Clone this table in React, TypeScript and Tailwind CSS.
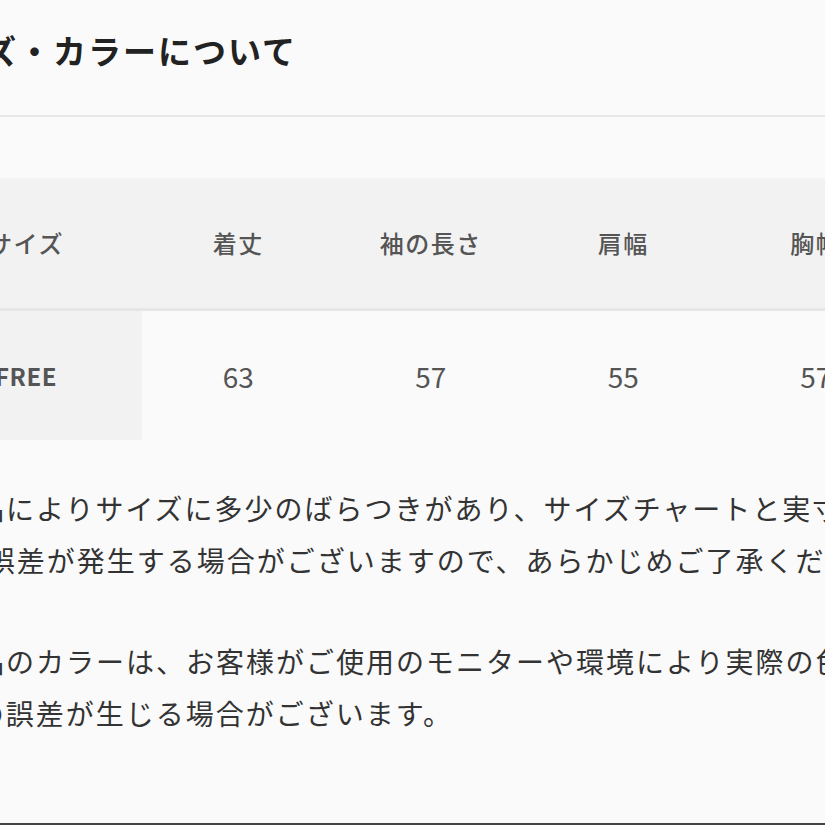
import React from 'react';

const headers = ['サイズ', '着丈', '袖の長さ', '肩幅', '胸幅', '裾幅'];
const values = ['FREE', '63', '57', '55', '57', '54'];

const App = () => {
  return (
    <div className="min-h-screen w-full overflow-hidden bg-[#fafafa] font-['Noto_Sans_CJK_JP','Noto_Sans',sans-serif]">
      <div className="-ml-[90px] w-[1300px] pt-[30px]">
        {/* Title */}
        <div className="border-b-2 border-[#e8e8e8] pb-[45px] pl-[4px]">
          <h2 className="text-[33px] font-bold leading-[40px] tracking-[2px] text-[#222]">
            サイズ・カラーについて
          </h2>
        </div>

        {/* Size table */}
        <div className="mt-[61px]">
          <div className="grid grid-cols-[232px_repeat(5,192.5px)] border-b-[3px] border-[#e6e6e6] bg-[#f2f2f2]">
            {headers.map((h) => (
              <div
                key={h}
                className="flex h-[130px] items-center justify-center text-[24px] font-medium tracking-[1.5px] text-[#555]"
              >
                {h}
              </div>
            ))}
          </div>
          <div className="grid grid-cols-[232px_repeat(5,192.5px)]">
            {values.map((v, i) => (
              <div
                key={i}
                className={`flex h-[129px] items-center justify-center text-[#555] ${
                  i === 0 ? 'bg-[#f2f2f2] text-[24px] font-bold tracking-[0.5px]' : 'text-[28px]'
                }`}
              >
                {v}
              </div>
            ))}
          </div>
        </div>

        {/* Notes */}
        <div className="mt-[42px] pl-[36px] text-[28px] leading-[52px] tracking-[2px] whitespace-nowrap text-[#333]">
          <p>
            商品によりサイズに多少のばらつきがあり、サイズチャートと実寸
            <br />
            <span className="-ml-[19px]">との誤差が発生する場合がございますので、あらかじめご了承ください。</span>
          </p>
          <p className="mt-[49px]">
            商品のカラーは、お客様がご使用のモニターや環境により実際の色と
            <br />
            との誤差が生じる場合がございます。
          </p>
        </div>

        <div className="mt-[84px] h-[40px] border-t-2 border-[#444]" />
      </div>
    </div>
  );
};

export default App;
